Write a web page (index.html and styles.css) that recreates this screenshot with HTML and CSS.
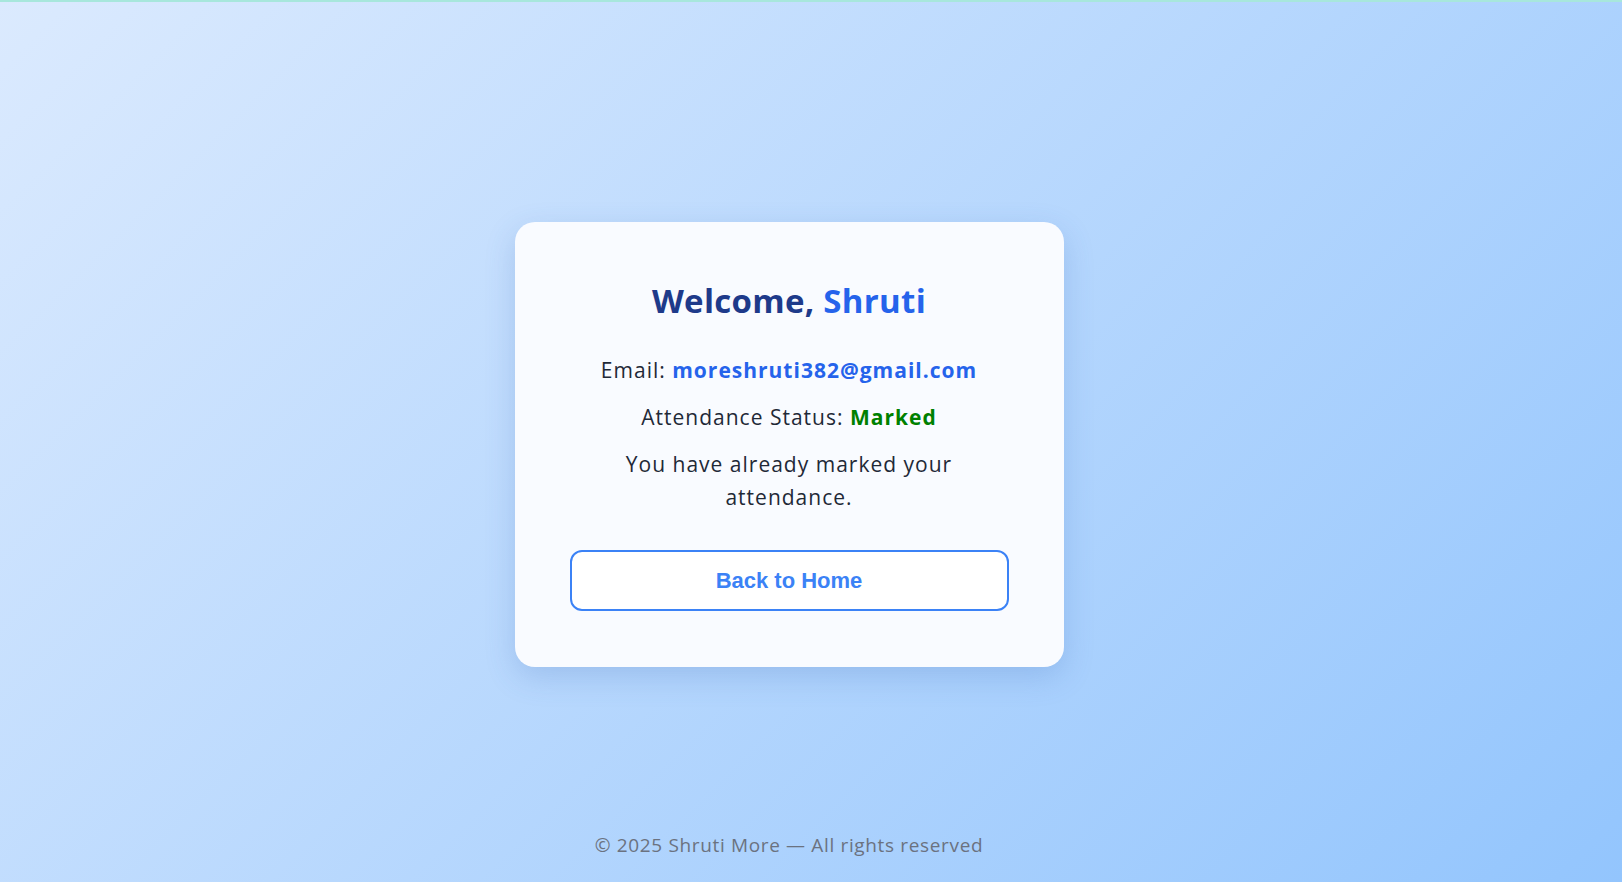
FILE: index.html
```html
<!DOCTYPE html>
<html lang="en">
<head>
<meta charset="UTF-8">
<title>Attendance</title>
<link rel="stylesheet" href="styles.css">
</head>
<body>
<main class="page">
  <section class="card">
    <h2 class="title">Welcome, <span class="name">Shruti</span></h2>
    <p class="line">Email: <strong class="email">moreshruti382@gmail.com</strong></p>
    <p class="line">Attendance Status: <strong class="status">Marked</strong></p>
    <p class="line message">You have already marked your attendance.</p>
    <a class="btn" href="#">Back to Home</a>
  </section>
</main>
<footer class="footer">© 2025 Shruti More — All rights reserved</footer>
</body>
</html>
```
FILE: styles.css
```css
* { box-sizing: border-box; }
html, body { height: 100%; }
body {
  margin: 0;
  min-height: 100vh;
  display: flex;
  flex-direction: column;
  padding-right: 44px;
  font-family: "Open Sans", "Noto Sans", sans-serif;
  color: #1f2937;
  background: linear-gradient(135deg, #dbeafe 0%, #93c5fd 100%);
  border-top: 2px solid #a7e7dc;
}
.page {
  flex: 1;
  display: flex;
  align-items: center;
  justify-content: center;
  padding-top: 78px;
}
.card {
  width: 549px;
  padding: 56px 55px;
  background: #f9fbff;
  border-radius: 20px;
  box-shadow: 0 10px 30px rgba(59, 103, 180, 0.22);
  text-align: center;
}
.title {
  margin: 0 0 30px;
  font-size: 33px;
  line-height: 46px;
  font-weight: 700;
  letter-spacing: 0.3px;
  color: #1e3a8a;
}
.name { color: #2563eb; }
.line {
  margin: 0 0 14px;
  font-size: 21px;
  line-height: 33px;
  letter-spacing: 1px;
}
.email { color: #2563eb; font-weight: 700; }
.status { color: #008000; font-weight: 700; }
.message { margin: 0 0 36px; }
.btn {
  display: block;
  width: 100%;
  padding: 16px 0;
  border: 2px solid #3b82f6;
  border-radius: 12px;
  background: #ffffff;
  color: #3b82f6;
  font-family: "Liberation Sans", Arial, sans-serif;
  font-size: 22px;
  line-height: 25px;
  font-weight: 700;
  text-decoration: none;
}
.footer {
  padding: 24px 0;
  text-align: center;
  font-size: 19px;
  line-height: 26px;
  letter-spacing: 0.65px;
  color: #6b7280;
}
```
